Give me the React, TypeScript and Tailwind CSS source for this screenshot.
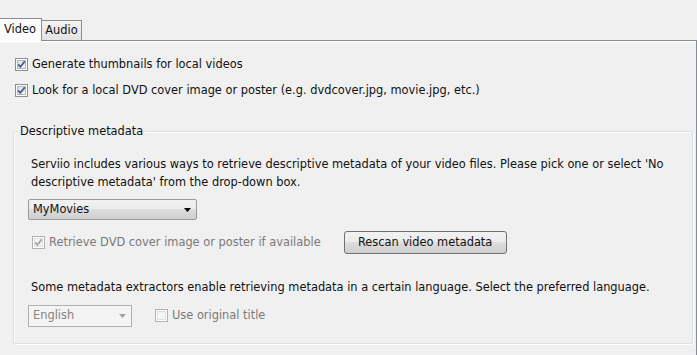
import React from "react";

function Check({ checked, disabled }: { checked?: boolean; disabled?: boolean }) {
  const id = disabled ? "cbd" : "cbg";
  return (
    <svg width="13" height="13" viewBox="0 0 13 13" className="shrink-0">
      <defs>
        <linearGradient id={id} x1="0" y1="0" x2="1" y2="1">
          <stop offset="0" stopColor={disabled ? "#f4f4f4" : "#dcdcdc"} />
          <stop offset="1" stopColor={disabled ? "#f4f4f4" : "#fbfbfb"} />
        </linearGradient>
      </defs>
      <rect x="0.5" y="0.5" width="12" height="12" fill="#fff" stroke={disabled ? "#b1b1b1" : "#8e8f8f"} />
      <rect x="2.5" y="2.5" width="8" height="8" fill={`url(#${id})`} stroke={disabled ? "#e0e0e0" : "#b6b6b6"} />
      {checked && (
        <path
          d="M3.2 6.4 L5.3 8.8 L9.8 3.4"
          fill="none"
          stroke={disabled ? "#a6a6a6" : "#4a5f97"}
          strokeWidth="1.8"
        />
      )}
    </svg>
  );
}

function Arrow({ color }: { color: string }) {
  return (
    <svg width="7" height="4" viewBox="0 0 7 4" className="shrink-0">
      <path d="M0 0 L7 0 L3.5 4 Z" fill={color} />
    </svg>
  );
}

export default function App() {
  return (
    <div className="w-[697px] h-[355px] bg-[#f0f0f0] overflow-hidden flex flex-col text-[11.4px] text-[#111] font-['DejaVu_Sans',sans-serif]">
      <div className="h-[40px] flex items-end shrink-0">
        <div className="relative z-10 h-[23px] w-[42px] border-r border-t border-[#898c95] bg-[#fcfcfc] flex items-center pl-[4px] -mb-px">
          Video
        </div>
        <div className="h-[20px] w-[40px] border-r border-t border-[#898c95] bg-[linear-gradient(to_bottom,#f3f3f3,#e3e3e3)] flex items-center justify-center">
          Audio
        </div>
      </div>
      <div className="flex-1 border-t border-r border-[#898c95] shadow-[inset_0_1px_0_#ffffff,inset_0_2px_0_#f8f8f8] flex flex-col">
        <div className="flex flex-col gap-[13px] pl-[15px] pt-[17px]">
          <div className="flex items-center gap-[4px] h-[13px]">
            <Check checked />
            <span>Generate thumbnails for local videos</span>
          </div>
          <div className="flex items-center gap-[4px] h-[13px]">
            <Check checked />
            <span>Look for a local DVD cover image or poster (e.g. dvdcover.jpg, movie.jpg, etc.)</span>
          </div>
        </div>
        <div className="relative ml-[13px] mt-[34px] w-[680px] h-[213px] border border-[#d5dfe5] rounded-[2px] shadow-[inset_1px_1px_0_#ffffff,1px_1px_0_#ffffff]">
          <div className="absolute -top-[8px] left-[4px] px-[2px] bg-[#f0f0f0] leading-[14px]">
            Descriptive metadata
          </div>
          <div className="pl-[17px] pt-[23px] leading-[18px] whitespace-nowrap">
            Serviio includes various ways to retrieve descriptive metadata of your video files. Please pick one or select 'No
            <br />
            descriptive metadata' from the drop-down box.
          </div>
          <div className="ml-[14px] mt-[8px] w-[169px] h-[21px] border border-[#9a9a9a] rounded-[2px] bg-[linear-gradient(to_bottom,#f2f2f2_0%,#ebebeb_50%,#dddddd_50%,#cfcfcf_100%)] flex items-center justify-between pl-[4px] pr-[5px]">
            <span>MyMovies</span>
            <Arrow color="#000" />
          </div>
          <div className="flex items-center mt-[11px] h-[23px]">
            <div className="flex items-center gap-[4px] pl-[18px] text-[#7a7a7a]">
              <Check checked disabled />
              <span>Retrieve DVD cover image or poster if available</span>
            </div>
            <div className="ml-[23px] w-[163px] h-[23px] border border-[#707070] rounded-[3px] bg-[linear-gradient(to_bottom,#f2f2f2_0%,#ebebeb_50%,#dddddd_50%,#cfcfcf_100%)] flex items-center justify-center">
              Rescan video metadata
            </div>
          </div>
          <div className="pl-[17px] mt-[24px] leading-[18px] whitespace-nowrap">
            Some metadata extractors enable retrieving metadata in a certain language. Select the preferred language.
          </div>
          <div className="flex items-center mt-[9px]">
            <div className="ml-[14px] w-[104px] h-[22px] border border-[#adb2b5] bg-[#f4f4f4] flex items-center justify-between pl-[4px] pr-[5px] text-[#838383]">
              <span>English</span>
              <Arrow color="#a0a0a0" />
            </div>
            <div className="flex items-center gap-[4px] ml-[23px] text-[#7a7a7a]">
              <Check disabled />
              <span>Use original title</span>
            </div>
          </div>
        </div>
      </div>
    </div>
  );
}
